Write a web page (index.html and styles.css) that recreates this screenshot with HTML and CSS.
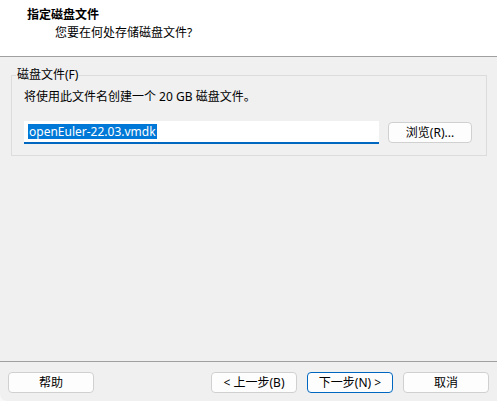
FILE: index.html
```html
<!DOCTYPE html>
<html lang="zh-CN">
<head>
<meta charset="utf-8">
<title>指定磁盘文件</title>
<link rel="stylesheet" href="styles.css">
</head>
<body>
<div class="window">
  <header class="header">
    <div class="title">指定磁盘文件</div>
    <div class="subtitle">您要在何处存储磁盘文件?</div>
  </header>
  <main class="main">
    <fieldset class="group">
      <legend class="legend">磁盘文件(F)</legend>
      <div class="group-body">
        <div class="desc">将使用此文件名创建一个 20 GB 磁盘文件。</div>
        <div class="file-row">
          <div class="input"><span class="sel">openEuler-22.03.vmdk</span></div>
          <button class="btn browse" type="button">浏览(R)...</button>
        </div>
      </div>
    </fieldset>
  </main>
  <footer class="footer">
    <button class="btn" type="button">帮助</button>
    <div class="spacer"></div>
    <button class="btn" type="button">&lt; 上一步(B)</button>
    <button class="btn primary" type="button">下一步(N) &gt;</button>
    <button class="btn" type="button">取消</button>
  </footer>
</div>
</body>
</html>
```
FILE: styles.css
```css
* { box-sizing: border-box; }
html, body {
  margin: 0;
  padding: 0;
  background: #f8f8f8;
}
body {
  width: 497px;
  height: 401px;
  font-family: "Segoe UI", "Noto Sans", "Noto Sans CJK SC", sans-serif;
  font-size: 12px;
  color: #000;
  overflow: hidden;
}
.window {
  width: 497px;
  height: 401px;
  background: #f0f0f0;
  display: flex;
  flex-direction: column;
  border-bottom-left-radius: 7px;
  overflow: hidden;
}
.header {
  height: 57px;
  background: #fff;
  border-bottom: 1px solid #a0a0a0;
  padding-top: 7px;
  flex: none;
}
.title {
  font-weight: bold;
  line-height: 16px;
  padding-left: 27px;
}
.subtitle {
  line-height: 16px;
  padding-left: 55px;
  margin-top: 2px;
}
.main {
  flex: 1;
  padding: 10px 10px 0 11px;
}
.group {
  margin: 0;
  padding: 0;
  border: 1px solid #dcdcdc;
  min-width: 0;
  height: 89px;
}
.legend {
  margin-left: 4px;
  padding: 0 1px;
  line-height: 16px;
}
.group-body {
  padding: 6px 9px 0 12px;
}
.desc {
  line-height: 16px;
}
.file-row {
  display: flex;
  align-items: flex-start;
  margin-top: 16px;
  gap: 9px;
}
.input {
  width: 355px;
  height: 23px;
  background: #fff;
  border-bottom: 2px solid #0067c0;
  padding: 3px 0 0 4px;
  line-height: 15px;
}
.sel {
  display: inline-block;
  background: #0078d7;
  color: #fff;
  line-height: 15px;
  padding: 0 1px;
}
.btn {
  font: inherit;
  color: #000;
  background: #fdfdfd;
  border: 1px solid #d0d0d0;
  border-radius: 4px;
  width: 86px;
  height: 21px;
  padding: 0;
  line-height: 19px;
  text-align: center;
}
.browse {
  width: 84px;
  margin-top: 1px;
}
.footer {
  height: 40px;
  flex: none;
  border-top: 1px solid #a0a0a0;
  display: flex;
  align-items: flex-start;
  padding: 10px 8px 0 8px;
  gap: 10px;
}
.spacer {
  flex: 1;
}
.primary {
  border: 1px solid #0067c0;
}
```
